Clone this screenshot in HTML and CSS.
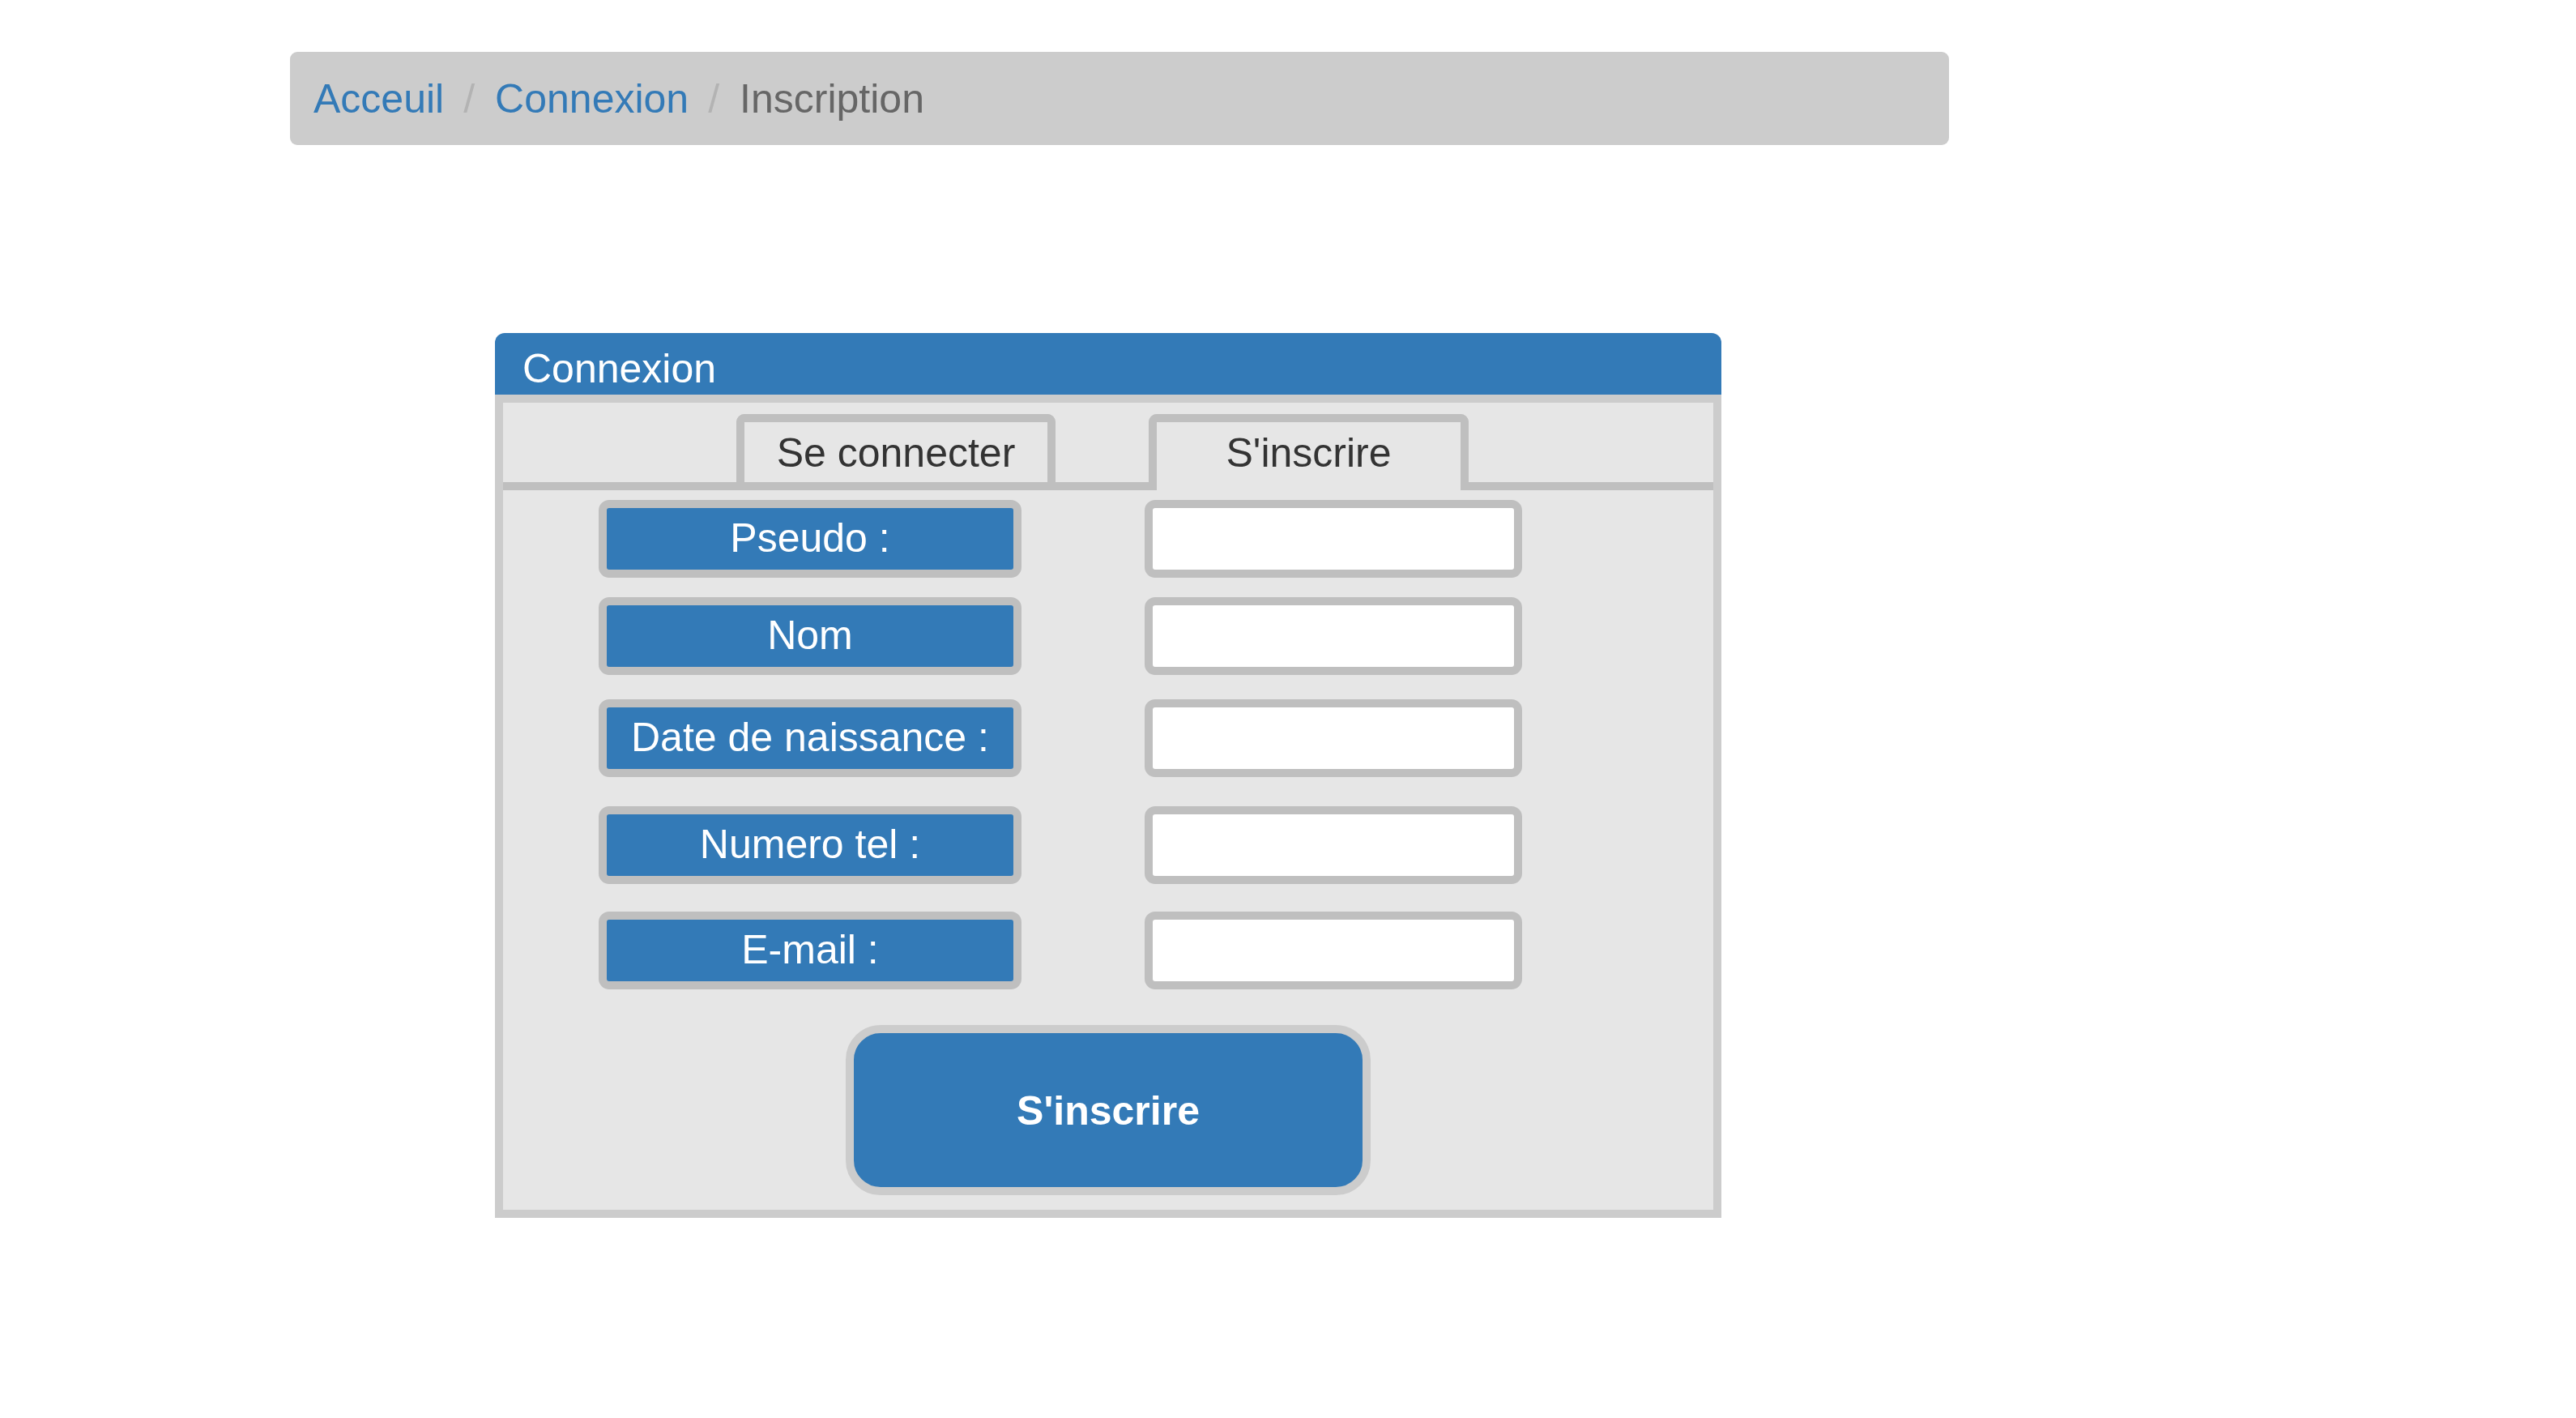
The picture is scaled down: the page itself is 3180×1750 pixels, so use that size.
FILE: index.html
```html
<!DOCTYPE html>
<html lang="fr">
<head>
<meta charset="utf-8">
<title>Inscription</title>
<link rel="stylesheet" href="styles.css">
</head>
<body>
  <ol class="breadcrumb">
    <li><a href="#">Acceuil</a></li>
    <li class="sep">/</li>
    <li><a href="#">Connexion</a></li>
    <li class="sep">/</li>
    <li class="active">Inscription</li>
  </ol>

  <section class="panel">
    <div class="panel-heading">Connexion</div>
    <div class="panel-body">
      <ul class="tabs">
        <li class="tab">Se connecter</li>
        <li class="tab tab-active">S'inscrire</li>
      </ul>
      <form class="form">
        <div class="row">
          <label class="field-label">Pseudo :</label>
          <input class="field-input" type="text">
        </div>
        <div class="row">
          <label class="field-label">Nom</label>
          <input class="field-input" type="text">
        </div>
        <div class="row">
          <label class="field-label">Date de naissance :</label>
          <input class="field-input" type="text">
        </div>
        <div class="row">
          <label class="field-label">Numero tel :</label>
          <input class="field-input" type="text">
        </div>
        <div class="row">
          <label class="field-label">E-mail :</label>
          <input class="field-input" type="text">
        </div>
        <div class="actions">
          <button class="submit" type="button">S'inscrire</button>
        </div>
      </form>
    </div>
  </section>
</body>
</html>
```

FILE: styles.css
```css
* { box-sizing: border-box; }

html, body {
  margin: 0;
  padding: 0;
  background: #ffffff;
}

body {
  font-family: "Liberation Sans", Arial, sans-serif;
  font-size: 50px;
  line-height: 1.15;
  color: #333333;
}

/* Breadcrumb */
.breadcrumb {
  list-style: none;
  margin: 64px 0 0 358px;
  width: 2048px;
  height: 115px;
  padding: 3px 0 0 29px;
  background: #cccccc;
  border-radius: 9px;
  display: flex;
  align-items: center;
}

.breadcrumb li { white-space: pre; }

.breadcrumb a {
  color: #337ab7;
  text-decoration: none;
}

.breadcrumb .sep {
  color: #b3b3b3;
  padding: 0 25px 0 24px;
}

.breadcrumb .active { color: #666666; }

/* Panel */
.panel {
  margin: 232px 0 0 611px;
  width: 1514px;
}

.panel-heading {
  height: 76px;
  background: #337ab7;
  color: #ffffff;
  border-radius: 12px 12px 0 0;
  padding: 16px 34px 0;
}

.panel-body {
  background: #e6e6e6;
  border: 10px solid #cccccc;
  padding: 14px 0 18px;
}

/* Tabs */
.tabs {
  list-style: none;
  margin: 0;
  padding: 0 0 0 288px;
  display: flex;
  align-items: flex-start;
  gap: 115px;
  border-bottom: 10px solid #bfbfbf;
  height: 94px;
}

.tab {
  width: 394px;
  height: 84px;
  border: 10px solid #bfbfbf;
  border-bottom: none;
  border-radius: 10px 10px 0 0;
  background: #e6e6e6;
  text-align: center;
  padding-top: 10px;
  color: #333333;
}

.tab-active {
  width: 395px;
  height: 94px;
  position: relative;
  z-index: 1;
}

/* Form */
.form {
  padding: 12px 0 0 118px;
}

.row {
  display: flex;
  gap: 152px;
  height: 96px;
}

.row:nth-child(2) { margin-top: 24px; }
.row:nth-child(3) { margin-top: 30px; }
.row:nth-child(4) { margin-top: 36px; }
.row:nth-child(5) { margin-top: 34px; }

.field-label {
  width: 522px;
  height: 96px;
  border: 10px solid #bfbfbf;
  border-radius: 13px;
  background: #337ab7;
  color: #ffffff;
  display: flex;
  align-items: center;
  justify-content: center;
}

.field-input {
  width: 466px;
  height: 96px;
  border: 10px solid #bfbfbf;
  border-radius: 13px;
  background: #ffffff;
  margin: 0;
  padding: 0 12px;
  font: inherit;
  outline: none;
}

.actions {
  display: flex;
  justify-content: center;
  margin: 44px 0 0 -118px;
}

.submit {
  width: 648px;
  height: 210px;
  border: 10px solid #cccccc;
  border-radius: 43px;
  background: #337ab7;
  color: #ffffff;
  font-family: "Liberation Sans", Arial, sans-serif;
  font-size: 50px;
  font-weight: bold;
  margin: 0;
  padding: 2px 0 0;
  cursor: pointer;
}
```
